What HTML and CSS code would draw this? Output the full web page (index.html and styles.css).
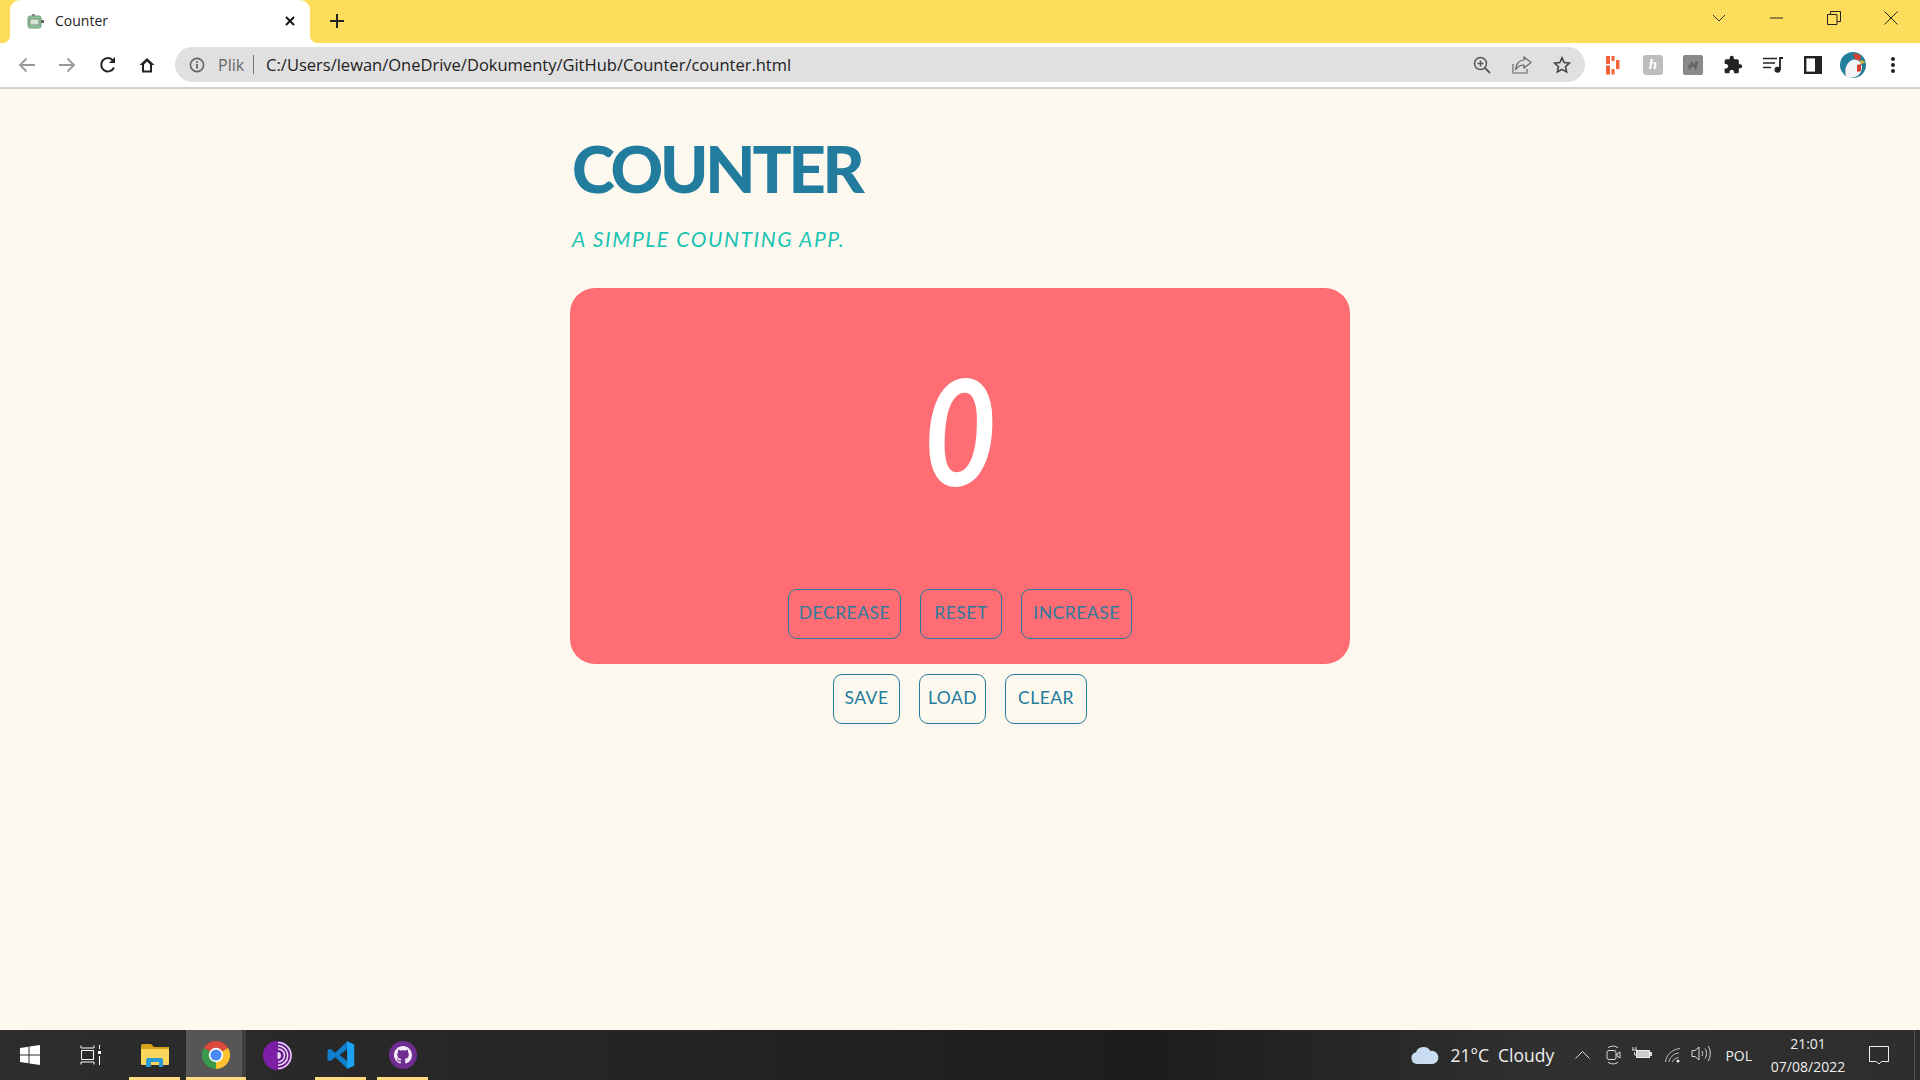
FILE: index.html
```html
<!DOCTYPE html>
<html lang="pl">
<head>
<meta charset="utf-8">
<title>Counter</title>
<link rel="stylesheet" href="styles.css">
</head>
<body>
<header class="tabstrip">
  <div class="tab">
    <svg class="favicon" viewBox="0 0 18 16"><rect x="1" y="3" width="13" height="12" rx="2" fill="#8fc79a" stroke="#6e9c78"/><rect x="3" y="6" width="9" height="6" fill="#d9e6d6" stroke="#6f7f72" stroke-width=".8"/><rect x="5" y="1" width="3" height="2" fill="#888"/><rect x="14" y="7" width="3" height="3" fill="#666"/></svg>
    <span class="tab-title">Counter</span>
    <svg class="tab-close" viewBox="0 0 12 12"><path d="M2 2l8 8M10 2l-8 8" stroke="#111" stroke-width="1.9" fill="none"/></svg>
  </div>
  <svg class="newtab" viewBox="0 0 16 16"><path d="M8 1v14M1 8h14" stroke="#222" stroke-width="2" fill="none"/></svg>
  <div class="winctl">
    <span class="winctl-chev"><svg width="14" height="8" viewBox="0 0 14 8"><path d="M1 1l6 6 6-6" stroke="#333" fill="none"/></svg></span>
    <span class="winctl-btn"><svg width="14" height="2" viewBox="0 0 14 2"><path d="M0 1h13" stroke="#222"/></svg></span>
    <span class="winctl-btn"><svg width="14" height="14" viewBox="0 0 14 14"><path d="M.5 3.500h9.500v10H.5zM3.500 3.500V.5h10v10H10" stroke="#222" fill="none"/></svg></span>
    <span class="winctl-btn"><svg width="14" height="14" viewBox="0 0 14 14"><path d="M.5.5l13 13M13.500 .5l-13 13" stroke="#222" fill="none"/></svg></span>
  </div>
</header>

<nav class="toolbar">
  <span class="tool"><svg width="18" height="16" viewBox="0 0 18 16"><path d="M17 8H2M8.500 1.500L2 8l6.500 6.500" stroke="#999" stroke-width="1.800" fill="none"/></svg></span>
  <span class="tool"><svg width="18" height="16" viewBox="0 0 18 16"><path d="M1 8h15M9.500 1.500L16 8l-6.500 6.500" stroke="#999" stroke-width="1.800" fill="none"/></svg></span>
  <span class="tool tool-reload"><svg width="18" height="18" viewBox="0 0 18 18"><path d="M15 11.500A6.700 6.700 0 1 1 14 4.300" stroke="#222" stroke-width="2" fill="none"/><path d="M16 1v6h-6z" fill="#222"/></svg></span>
  <span class="tool"><svg width="18" height="18" viewBox="0 0 18 18"><path d="M9 2L1.500 9H4v7.500h10V9h2.500zM6 14.500V8.500L9 5.500l3 3v6z" fill="#222" fill-rule="evenodd"/></svg></span>
  <div class="omnibox">
    <svg class="omni-info" width="16" height="16" viewBox="0 0 16 16"><circle cx="8" cy="8" r="6.600" stroke="#666" stroke-width="1.600" fill="none"/><rect x="7.100" y="7" width="1.800" height="4.600" fill="#666"/><rect x="7.100" y="4.200" width="1.800" height="1.800" fill="#666"/></svg>
    <span class="omni-scheme">Plik</span>
    <span class="omni-sep"></span>
    <span class="omni-url">C:/Users/lewan/OneDrive/Dokumenty/GitHub/Counter/counter.html</span>
    <span class="tool omni-tool"><svg width="18" height="18" viewBox="0 0 18 18"><circle cx="7.500" cy="7.500" r="6" stroke="#555" stroke-width="1.500" fill="none"/><path d="M11.800 11.800L17 17" stroke="#555" stroke-width="1.800"/><path d="M7.500 4.500v6M4.500 7.500h6" stroke="#555" stroke-width="1.400"/></svg></span>
    <span class="tool omni-tool"><svg width="20" height="18" viewBox="0 0 20 18"><path d="M1 8v9h14v-4" stroke="#666" stroke-width="1.200" fill="none"/><path d="M12 1l7 5.500-7 5.500V9C8 9 5.500 10.500 3.500 14 4 8.500 7 4.500 12 4z" stroke="#666" stroke-width="1.200" fill="none"/></svg></span>
    <span class="tool omni-tool"><svg width="18" height="18" viewBox="0 0 18 18"><path d="M9 1.800l2.200 4.800 5.200.6-3.900 3.500 1.100 5.200L9 13.300l-4.600 2.600 1.100-5.200L1.600 7.200l5.200-.6z" stroke="#444" stroke-width="1.600" fill="none"/></svg></span>
  </div>
  <span class="tool"><svg width="14" height="20" viewBox="0 0 14 20"><g fill="#f4623a"><rect x="0" y="1" width="4" height="8"/><rect x="0" y="10.500" width="4" height="9"/><rect x="5.500" y="1" width="3" height="5"/><rect x="5.500" y="14" width="3" height="5.500"/><rect x="10" y="5" width="3.500" height="9"/></g></svg></span>
  <span class="tool"><span class="ext-h">h</span></span>
  <span class="tool"><svg width="20" height="20" viewBox="0 0 20 20"><rect width="20" height="20" rx="2" fill="#8a8a8a"/><path d="M0 3v14" stroke="#666" stroke-width="1.500" stroke-dasharray="1 1"/><path d="M5 11c2-1 2-4 4-4s1 2 2 2 1-3 3-3l2 1-1 1c-1 3-1 5-2 7h-1l-.5-3H8l-1 3H6z" fill="#666"/></svg></span>
  <span class="tool"><svg width="20" height="20" viewBox="0 0 24 24"><path fill="#222" d="M20.500 11H19V7c0-1.100-.9-2-2-2h-4V3.500C13 2.120 11.880 1 10.500 1S8 2.120 8 3.500V5H4c-1.100 0-1.990.9-1.990 2v3.800H3.500c1.490 0 2.700 1.210 2.700 2.700s-1.210 2.700-2.700 2.700H2V20c0 1.100.9 2 2 2h3.800v-1.500c0-1.490 1.210-2.700 2.700-2.700 1.490 0 2.700 1.210 2.700 2.700V22H17c1.100 0 2-.9 2-2v-4h1.500c1.380 0 2.500-1.120 2.500-2.500S21.880 11 20.500 11z"/></svg></span>
  <span class="tool"><svg width="20" height="16" viewBox="0 0 20 16"><path d="M0 1.500h14M0 6h12M0 10.500h8" stroke="#222" stroke-width="1.700"/><circle cx="14.500" cy="12.700" r="3" fill="#222"/><path d="M17 13V1h3" stroke="#222" stroke-width="1.800" fill="none"/></svg></span>
  <span class="tool"><svg width="18" height="18" viewBox="0 0 18 18"><rect x="1.200" y="1.200" width="15.600" height="15.600" fill="#fff" stroke="#222" stroke-width="2.400"/><rect x="11" y="1" width="6" height="16" fill="#222"/></svg></span>
  <span class="tool"><svg width="26" height="26" viewBox="0 0 26 26"><circle cx="13" cy="13" r="13" fill="#227f9c"/><path d="M6 24c-2-6 0-13 6-16 2-1 6-1 8 2l2 4c0 5-2 9-7 11-3 1-7 1-9-1z" fill="#f4f4f4"/><path d="M13 2c3-1 6 0 8 2l-1 5-5-2z" fill="#d64034"/><path d="M20 8l6 2-5 2z" fill="#f0b429"/><path d="M17 13l4-1 0 7-4 1z" fill="#d64034"/></svg></span>
  <span class="tool"><svg width="4" height="16" viewBox="0 0 4 16"><circle cx="2" cy="2" r="2" fill="#222"/><circle cx="2" cy="8" r="2" fill="#222"/><circle cx="2" cy="14" r="2" fill="#222"/></svg></span>
</nav>

<main class="page">
  <div class="app">
    <h1 class="title">Counter</h1>
    <p class="subtitle">A simple counting app.</p>
    <section class="card">
      <div class="count">0</div>
      <div class="btn-row">
        <button class="btn btn-decrease">Decrease</button>
        <button class="btn btn-reset">Reset</button>
        <button class="btn btn-increase">Increase</button>
      </div>
    </section>
    <div class="btn-row storage">
      <button class="btn btn-save">Save</button>
      <button class="btn btn-load">Load</button>
      <button class="btn btn-clear">Clear</button>
    </div>
  </div>
</main>

<footer class="taskbar">
  <span class="tb-item tb-start"><svg width="20" height="20" viewBox="0 0 20 20"><path fill="#fff" d="M0 3l8.500-1.200V9.500H0zM9.500 1.600L20 0v9.500H9.500zM0 10.500h8.500v7.700L0 17zM9.500 10.500H20V20L9.500 18.400z"/></svg></span>
  <span class="tb-item tb-view"><svg width="21" height="20" viewBox="0 0 21 20"><path d="M1 .5V3h13V.5M1 19.500V17h13v2.500M1.500 5.500h12v9h-12z" stroke="#fff" fill="none"/><rect x="18" y="6" width="3" height="3" fill="#fff"/><path d="M19.500 0v4M19.500 11v9" stroke="#fff"/></svg></span>
  <span class="tb-item tb-app tb-explorer"><svg width="28" height="24" viewBox="0 0 28 24"><path d="M0 3a2 2 0 0 1 2-2h8l3 3h15v4H0z" fill="#d9a21b"/><path d="M0 6h28v15a1 1 0 0 1-1 1H1a1 1 0 0 1-1-1z" fill="#fbd65a"/><path d="M5 24v-7a2 2 0 0 1 2-2h13a2 2 0 0 1 2 2v7h-4v-5H10v5z" fill="#2a9ad6"/></svg></span>
  <span class="tb-item tb-app tb-chrome"><svg width="28" height="28" viewBox="0 0 24 24"><path d="M12 12L1.600 6a12 12 0 0 1 20.800 0z" fill="#dc4a3d"/><path d="M12 12L22.400 6A12 12 0 0 1 12 24z" fill="#fbc02d"/><path d="M12 12V24A12 12 0 0 1 1.600 6z" fill="#3a9a4b"/><circle cx="12" cy="12" r="6.200" fill="#fff"/><circle cx="12" cy="12" r="4.800" fill="#4a8af4"/></svg></span>
  <span class="tb-item tb-app tb-tor"><svg width="29" height="29" viewBox="0 0 29 29"><circle cx="14.500" cy="14.500" r="14.500" fill="#6a1b8f"/><path d="M14.500 0a14.500 14.500 0 0 0 0 29z" fill="#7d1fa6"/><path d="M14.500 11a3.500 3.500 0 0 1 0 7z" fill="#ecdcf3"/><path d="M15 8a6.500 6.500 0 0 1 0 13M15 4.800a9.700 9.700 0 0 1 0 19.400M15 1.500a13 13 0 0 1 0 26" stroke="#ecdcf3" stroke-width="1.500" fill="none"/></svg></span>
  <span class="tb-item tb-app tb-code"><svg width="30" height="30" viewBox="0 0 24 24"><path fill-rule="evenodd" fill="#0f7fcc" d="M17 1L7.500 10.200 3.300 7 1.200 8v8l2.100 1 4.200-3.200L17 23l5.500-2.500V3.500zM17 7.200L10.800 12l6.200 4.800z"/><path d="M17 1l5.500 2.500v17L17 23z" fill="#1ea3f3"/></svg></span>
  <span class="tb-item tb-app tb-gh"><svg width="28" height="28" viewBox="0 0 28 28"><circle cx="14" cy="14" r="14" fill="#6f2c91"/><g transform="translate(5 5) scale(1.125)"><path fill="#f3e9f7" d="M8 0C3.580 0 0 3.580 0 8c0 3.540 2.290 6.530 5.470 7.590.4.070.55-.17.55-.38 0-.19-.01-.82-.01-1.490-2.010.37-2.530-.49-2.690-.94-.09-.23-.48-.94-.82-1.130-.28-.15-.68-.52-.01-.53.63-.01 1.080.58 1.230.82.720 1.210 1.870.87 2.330.66.070-.52.280-.87.510-1.070-1.780-.2-3.640-.89-3.640-3.950 0-.87.310-1.590.820-2.150-.08-.2-.36-1.020.080-2.120 0 0 .67-.21 2.200.82.640-.18 1.320-.27 2-.27.680 0 1.360.09 2 .27 1.530-1.040 2.200-.82 2.200-.82.440 1.100.160 1.920.080 2.120.510.560.820 1.270.820 2.150 0 3.070-1.870 3.750-3.650 3.950.290.25.540.730.540 1.480 0 1.070-.01 1.930-.01 2.200 0 .21.150.46.550.38A8.013 8.013 0 0 0 16 8c0-4.420-3.580-8-8-8z"/></g></svg></span>
  <div class="tray">
    <svg class="tray-cloud" width="28" height="18" viewBox="0 0 28 18"><path d="M6 18a6 6 0 0 1-1-11.800A8 8 0 0 1 19.500 5 6.500 6.500 0 0 1 22 18z" fill="#c9dcf2"/></svg>
    <span class="tray-weather">21°C&nbsp; Cloudy</span>
    <svg class="tray-chev" width="15" height="9" viewBox="0 0 15 9"><path d="M.5 8.500l7-7 7 7" stroke="#ddd" fill="none"/></svg>
    <svg class="tray-meet" width="15" height="20" viewBox="0 0 15 20"><path d="M2 3c2-2.500 8-2.500 10 0M2 17c2 2.500 8 2.500 10 0" stroke="#ddd" fill="none"/><rect x="1" y="5.500" width="9" height="9" rx="2" stroke="#ddd" fill="none"/><path d="M11 9l3-2v6l-3-2z" stroke="#ddd" fill="none"/></svg>
    <svg class="tray-batt" width="20" height="12" viewBox="0 0 20 12"><path d="M1 0v3M4 0v3M0 3h5M2.500 5v3h2" stroke="#ddd" fill="none"/><rect x="4.500" y="3.500" width="13" height="7" fill="#ccc" stroke="#eee"/><rect x="18" y="5" width="2" height="4" fill="#ddd"/></svg>
    <svg class="tray-wifi" width="16" height="15" viewBox="0 0 16 15"><path d="M.5 14C1 8 6 1.500 15 .5M4 14c.5-4 4-8.500 10-9M7.500 14c.5-2 2.500-4 6-4.500" stroke="#bbb" fill="none"/><circle cx="13" cy="13" r="1.500" fill="#eee"/></svg>
    <svg class="tray-vol" width="21" height="17" viewBox="0 0 21 17"><path d="M1 5.500h3L8 2v13l-4-3.500H1z" stroke="#ddd" fill="none"/><path d="M11 6c1 1.500 1 3.500 0 5M14 3.500c2 3 2 7 0 10M17 1c3 4 3 11 0 15" stroke="#ddd" fill="none"/></svg>
    <span class="tray-lang">POL</span>
    <span class="tray-clock"><span>21:01</span><span>07/08/2022</span></span>
    <svg class="tray-note" width="20" height="19" viewBox="0 0 20 19"><path d="M.5.500h19v15h-7l-2.500 2.500-2.500-2.500h-7z" stroke="#eee" fill="none"/></svg>
    <span class="tray-desk"></span>
  </div>
</footer>
</body>
</html>
```
FILE: styles.css
```css
* { box-sizing: border-box; }
html, body { height: 100%; }
body {
  margin: 0;
  display: flex;
  flex-direction: column;
  height: 1080px;
  overflow: hidden;
  background: #fef9ef;
  font-family: "Open Sans", "Noto Sans", sans-serif;
}

/* Browser chrome */
.tabstrip {
  height: 43px;
  flex: none;
  display: flex;
  align-items: stretch;
  padding-left: 10px;
  background: #ffdd5c;
}
.tab {
  position: relative;
  width: 300px;
  display: flex;
  align-items: center;
  background: #fff;
  border-radius: 10px 10px 0 0;
  padding: 0 14px 2px 17px;
}
.tab::before, .tab::after {
  content: "";
  position: absolute;
  bottom: 0;
  width: 8px;
  height: 8px;
}
.tab::before { left: -8px; background: radial-gradient(circle at 0 0, transparent 8px, #fff 8.5px); }
.tab::after { right: -8px; background: radial-gradient(circle at 100% 0, transparent 8px, #fff 8.5px); }
.favicon { width: 18px; height: 16px; flex: none; }
.tab-title { margin-left: 10px; font-size: 14px; color: #222; }
.tab-close { width: 12px; height: 12px; margin-left: auto; }
.newtab { width: 16px; height: 16px; align-self: center; margin: 0 0 2px 19px; }
.winctl { margin-left: auto; display: flex; }
.winctl-chev { width: 38px; display: flex; align-items: center; justify-content: center; margin-right: 10px; height: 36px; }
.winctl-btn { width: 57px; height: 36px; display: flex; align-items: center; justify-content: center; }
.winctl-btn:last-child { width: 58px; }

.toolbar {
  height: 46px;
  flex: none;
  display: flex;
  align-items: center;
  padding: 0 7px 1px 7px;
  background: #fff;
  border-bottom: 2px solid #d3d3cf;
}
.tool {
  width: 40px;
  height: 36px;
  flex: none;
  display: flex;
  align-items: center;
  justify-content: center;
}
.tool-reload { padding-left: 2px; }
.omnibox {
  flex: 1;
  height: 35px;
  margin: 0 8px;
  padding: 0 3px 0 14px;
  display: flex;
  align-items: center;
  background: #e0e0e0;
  border-radius: 18px;
}
.omni-info { flex: none; }
.omni-scheme { margin-left: 13px; color: #666; font-size: 16px; }
.omni-sep { width: 1px; height: 19px; margin: 0 12px 0 9px; background: #777; }
.omni-url { flex: 1; color: #222; font-size: 16.500px; }

/* Page */
.page { flex: 1; display: flex; justify-content: center; min-height: 0; }
.app { width: 780px; padding-top: 41px; }
.title {
  margin: 0 0 0 2px;
  font: 900 65px/76px Lato, "Open Sans", sans-serif;
  text-transform: uppercase;
  letter-spacing: -3.200px;
  color: #227c9d;
}
.subtitle {
  margin: 16px 0 0 2px;
  font: 400 italic 21px/34px Lato, "Open Sans", sans-serif;
  text-transform: uppercase;
  letter-spacing: 1.600px;
  color: #17c3b2;
}
.card {
  margin-top: 32px;
  height: 376px;
  display: flex;
  flex-direction: column;
  align-items: center;
  background: #fe6d73;
  border-radius: 25px;
  padding-bottom: 25px;
}
.count {
  flex: 1;
  display: flex;
  align-items: center;
  justify-content: center;
  padding-bottom: 20px;
  font: 700 italic 148px/1 Lato, "Open Sans", sans-serif;
  color: #fff;
  transform: scaleX(.85);
}
.btn-row { display: flex; justify-content: center; gap: 19px; }
.storage { margin-top: 10px; }
.btn {
  height: 50px;
  padding: 0 0 3px;
  border: 1.500px solid #227c9d;
  border-radius: 9px;
  background: transparent;
  color: #227c9d;
  font: 400 17.500px/1 Lato, "Open Sans", sans-serif;
  letter-spacing: .5px;
  text-transform: uppercase;
}
.card .btn { color: #2d7c9e; }
.btn-decrease { width: 113px; }
.btn-reset { width: 82px; }
.btn-increase { width: 111px; }
.btn-save { width: 67px; }
.btn-load { width: 67px; }
.btn-clear { width: 82px; }

/* Taskbar */
.taskbar {
  height: 50px;
  flex: none;
  display: flex;
  align-items: center;
  color: #eee;
  background: linear-gradient(90deg, #2d2d2d 0, #282828 20%, #1d1d1d 60%, #303030 80%, #2e2e2e 100%);
}
.tb-item { height: 50px; flex: none; display: flex; align-items: center; justify-content: center; }
.tb-start { width: 60px; }
.tb-view { width: 60px; margin-right: 9px; }
.tb-app { position: relative; width: 51px; }
.tb-app::after {
  content: "";
  position: absolute;
  left: 0;
  right: 0;
  bottom: 0;
  height: 3px;
  background: #ffdc80;
}
.tb-explorer { margin-right: 6px; }
.tb-chrome { width: 60px; background: linear-gradient(90deg, #565656 56px, #3e3e3e 56px); margin-right: 5px; }
.tb-tor::after { display: none; }
.tb-tor { width: 52px; margin-right: 12px; }
.tb-code { margin-right: 11px; }
.tray { margin-left: auto; height: 50px; display: flex; align-items: center; }
.tray-cloud { margin-right: 11px; }
.tray-weather { font-size: 17.500px; width: 103px; white-space: nowrap; margin-right: 22px; }
.tray-chev { margin-right: 16px; margin-top: -2px; }
.tray-meet { margin-right: 11px; }
.tray-batt { margin-right: 13px; margin-top: -4px; }
.tray-wifi { margin-right: 10px; }
.tray-vol { margin-right: 13px; margin-top: -4px; }
.tray-lang { font-size: 14px; margin-right: 18px; }
.tray-clock { width: 76px; margin-right: 23px; display: flex; flex-direction: column; align-items: center; font-size: 14px; line-height: 23px; }
.tray-note { margin-right: 25px; }
.tray-desk { width: 1px; height: 50px; background: #555; margin-right: 5px; }

.ext-h {
  width: 20px;
  height: 20px;
  display: flex;
  align-items: center;
  justify-content: center;
  border-radius: 3px;
  background: #bdbdbd;
  color: #fff;
  font: italic 700 15px/1 "Liberation Serif", serif;
}
```
